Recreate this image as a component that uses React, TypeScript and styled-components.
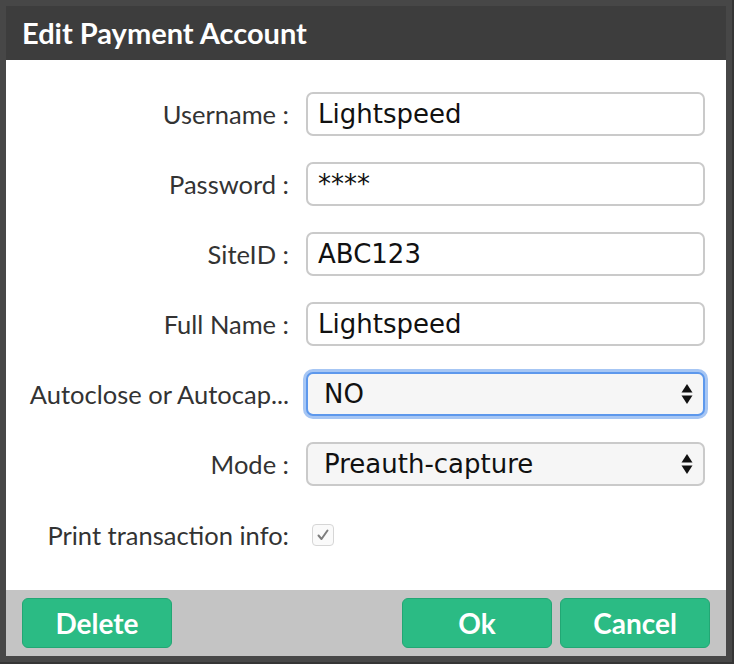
import styled, { createGlobalStyle } from "styled-components";

const GlobalStyle = createGlobalStyle`
    html, body {
        margin: 0;
        padding: 0;
        background: #353535;
        width: 734px;
        height: 664px;
        overflow: hidden;
    }
`;

interface FieldData {
    label: string
    value: string
    kind: 'text' | 'select'
    focused?: boolean
}

const fields: FieldData[] = [
    { label: 'Username :', value: 'Lightspeed', kind: 'text' },
    { label: 'Password :', value: '****', kind: 'text' },
    { label: 'SiteID :', value: 'ABC123', kind: 'text' },
    { label: 'Full Name :', value: 'Lightspeed', kind: 'text' },
    { label: 'Autoclose or Autocap...', value: 'NO', kind: 'select', focused: true },
    { label: 'Mode :', value: 'Preauth-capture', kind: 'select' },
];

function SelectArrows() {
    return (
        <svg width="12" height="22" viewBox="0 0 12 22">
            <path d="M6 1 L11.5 9.5 L0.5 9.5 Z" fill="#111" />
            <path d="M6 21 L11.5 12.5 L0.5 12.5 Z" fill="#111" />
        </svg>
    );
}

export default function App() {
    return (
        <>
            <GlobalStyle />
            <Dialog>
                <Header>Edit Payment Account</Header>
                <Body>
                    {fields.map(f => (
                        <Row key={f.label}>
                            <Label>{f.label}</Label>
                            {f.kind === 'text' ? (
                                <TextField>{f.value}</TextField>
                            ) : (
                                <SelectField focused={!!f.focused}>
                                    <span>{f.value}</span>
                                    <SelectArrows />
                                </SelectField>
                            )}
                        </Row>
                    ))}
                    <CheckRow>
                        <Label>Print transaction info:</Label>
                        <Checkbox>
                            <svg width="16" height="16" viewBox="0 0 16 16">
                                <path d="M3.5 8.5 L6.5 12 L12.5 3.5" fill="none" stroke="#7d7d7d" strokeWidth="2" strokeLinecap="round" strokeLinejoin="round" />
                            </svg>
                        </Checkbox>
                    </CheckRow>
                </Body>
                <Footer>
                    <Button>Delete</Button>
                    <Spacer />
                    <Button>Ok</Button>
                    <Button>Cancel</Button>
                </Footer>
            </Dialog>
        </>
    );
}

const Dialog = styled.div`
    width: 732px;
    height: 662px;
    box-sizing: border-box;
    border: 6px solid #474747;
    display: flex;
    flex-direction: column;
    background: #fff;
`;
const Header = styled.div`
    height: 54px;
    background: #3d3d3d;
    color: #fff;
    font-family: Lato, "Noto Sans", sans-serif;
    font-weight: 700;
    font-size: 29px;
    line-height: 54px;
    padding-left: 16px;
`;
const Body = styled.div`
    flex: 1;
    padding: 32px 21px 0 23px;
    display: flex;
    flex-direction: column;
    gap: 26px;
`;
const Row = styled.div`
    display: grid;
    grid-template-columns: 260px 1fr;
    column-gap: 17px;
    align-items: center;
`;
const CheckRow = styled(Row)`
    margin-top: 8px;
`;
const Label = styled.div`
    text-align: right;
    font-family: Lato, "Noto Sans", sans-serif;
    font-size: 25.5px;
    color: #333;
    white-space: nowrap;
    overflow: hidden;
    text-overflow: ellipsis;
`;
const TextField = styled.div`
    height: 44px;
    box-sizing: border-box;
    border: 2px solid #cacaca;
    border-radius: 7px;
    padding: 0 10px;
    display: flex;
    align-items: center;
    font-family: "DejaVu Sans", sans-serif;
    font-size: 26px;
    color: #111;
`;
const SelectField = styled.div<{ focused: boolean }>`
    height: 44px;
    box-sizing: border-box;
    border: 2px solid ${p => p.focused ? '#5d98ec' : '#cacaca'};
    box-shadow: ${p => p.focused ? '0 0 0 3px #a6c6f4' : 'none'};
    border-radius: 7px;
    background: #f6f6f6;
    padding: 0 10px 0 16px;
    display: flex;
    align-items: center;
    justify-content: space-between;
    font-family: "DejaVu Sans", sans-serif;
    font-size: 26px;
    color: #111;
`;
const Checkbox = styled.div`
    width: 20px;
    height: 20px;
    margin-left: 6px;
    border: 1px solid #d6d6d6;
    border-radius: 4px;
    background: #fafafa;
    display: flex;
    align-items: center;
    justify-content: center;
`;
const Footer = styled.div`
    height: 66px;
    box-sizing: border-box;
    background: #c4c4c4;
    padding: 8px 16px;
    display: flex;
    gap: 8px;
`;
const Spacer = styled.div`
    flex: 1;
`;
const Button = styled.button`
    width: 150px;
    height: 50px;
    border: 1px solid #22a774;
    border-radius: 6px;
    background: #2bbb84;
    color: #fff;
    font-family: Lato, "Noto Sans", sans-serif;
    font-weight: 700;
    font-size: 28px;
    padding: 0;
`;
